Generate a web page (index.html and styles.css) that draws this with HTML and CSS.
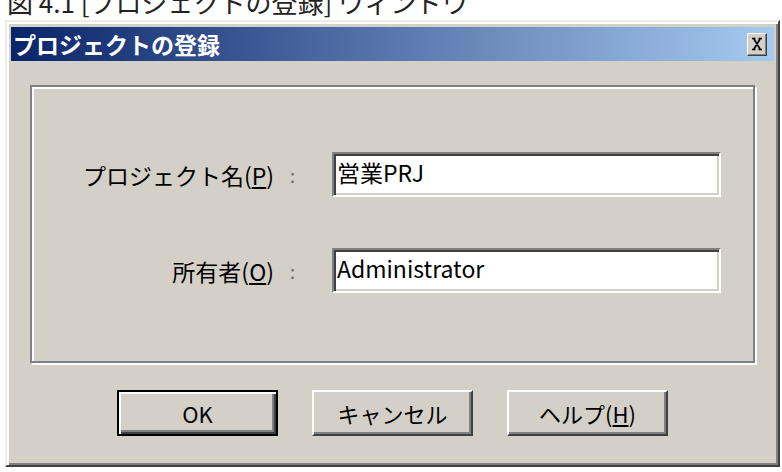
FILE: index.html
```html
<!DOCTYPE html>
<html lang="ja">
<head>
    <meta charset="UTF-8">
    <title>プロジェクトの登録</title>
    <link rel="stylesheet" href="styles.css">
</head>
<body>
    <div class="caption">図 4.1 [プロジェクトの登録] ウィンドウ</div>

    <div class="window">
        <!-- タイトルバー -->
        <div class="titlebar">
            <span class="title">プロジェクトの登録</span>
            <button class="close" type="button">
                <svg width="12" height="14" viewBox="0 0 12 14">
                    <path d="M1 1.5h3.5M7.5 1.5h3.5M1 12.5h3.5M7.5 12.5h3.5M3 2l6 10M9 2l-6 10" stroke="#000" stroke-width="1.6" fill="none"/>
                </svg>
            </button>
        </div>

        <!-- 入力欄 -->
        <div class="group">
            <div class="field">
                <label class="label">プロジェクト名(<u>P</u>)</label>
                <span class="colon">:</span>
                <div class="input">営業PRJ</div>
            </div>
            <div class="field">
                <label class="label">所有者(<u>O</u>)</label>
                <span class="colon">:</span>
                <div class="input">Administrator</div>
            </div>
        </div>

        <!-- ボタン -->
        <div class="buttons">
            <button class="btn default" type="button">OK</button>
            <button class="btn" type="button">キャンセル</button>
            <button class="btn" type="button">ヘルプ(<u>H</u>)</button>
        </div>
    </div>
</body>
</html>
```

FILE: styles.css
```css
body {
    margin: 0;
    background-color: #fff;
    font-family: "Noto Sans CJK JP", "Liberation Sans", sans-serif;
    color: #000;
    overflow: hidden;
}
.caption {
    font-size: 26px;
    line-height: 26px;
    margin: -11px 0 0 7px;
    color: #222;
    white-space: nowrap;
}
.window {
    box-sizing: border-box;
    width: 775px;
    height: 447px;
    margin: 5px 0 0 5px;
    padding: 5px 4px 4px 4px;
    background-color: #d4d0c8;
    border: 2px solid;
    border-color: #ecebe6 #404040 #404040 #ecebe6;
    box-shadow: inset 2px 2px 0 #fff, inset -2px -2px 0 #808080;
}
.titlebar {
    height: 34px;
    display: flex;
    align-items: center;
    justify-content: space-between;
    padding: 0 7px 0 2px;
    background: linear-gradient(to right, #0a246a, #a6caf0);
}
.title {
    color: #fff;
    font-weight: bold;
    font-size: 23px;
    line-height: 1;
}
.close {
    box-sizing: border-box;
    width: 20px;
    height: 23px;
    padding: 0;
    display: flex;
    align-items: center;
    justify-content: center;
    background-color: #d4d0c8;
    border: 1px solid;
    border-color: #fff #404040 #404040 #fff;
    box-shadow: inset -1px -1px 0 #808080;
}
.group {
    box-sizing: border-box;
    height: 278px;
    margin: 24px 19px 0 19px;
    padding-top: 65px;
    border: 2px solid #808080;
    box-shadow: 2px 2px 0 #fff, inset 2px 2px 0 #fff;
    display: flex;
    flex-direction: column;
    gap: 51px;
}
.field {
    display: flex;
    align-items: center;
    font-size: 23px;
}
.label {
    width: 242px;
    text-align: right;
}
.colon {
    width: 58px;
    box-sizing: border-box;
    padding-left: 16px;
    color: #666;
    font-size: 18px;
}
.input {
    box-sizing: border-box;
    width: 389px;
    height: 45px;
    display: flex;
    align-items: center;
    padding: 0 0 4px 3px;
    background-color: #fff;
    border: 2px solid;
    border-color: #808080 #fff #fff #808080;
    box-shadow: inset 2px 2px 0 #404040, inset -2px -2px 0 #d4d0c8;
    line-height: 1;
}
.buttons {
    display: flex;
    justify-content: center;
    gap: 34px;
    margin-top: 27px;
}
.btn {
    box-sizing: border-box;
    width: 161px;
    height: 46px;
    padding: 0;
    font-family: inherit;
    font-size: 22px;
    background-color: #d4d0c8;
    color: #000;
    border: 2px solid;
    border-color: #fff #404040 #404040 #fff;
    box-shadow: inset -2px -2px 0 #808080;
}
.btn.default {
    border: 2px solid #000;
    box-shadow: inset 2px 2px 0 #fff, inset -2px -2px 0 #404040, inset -4px -4px 0 #808080;
}
```
